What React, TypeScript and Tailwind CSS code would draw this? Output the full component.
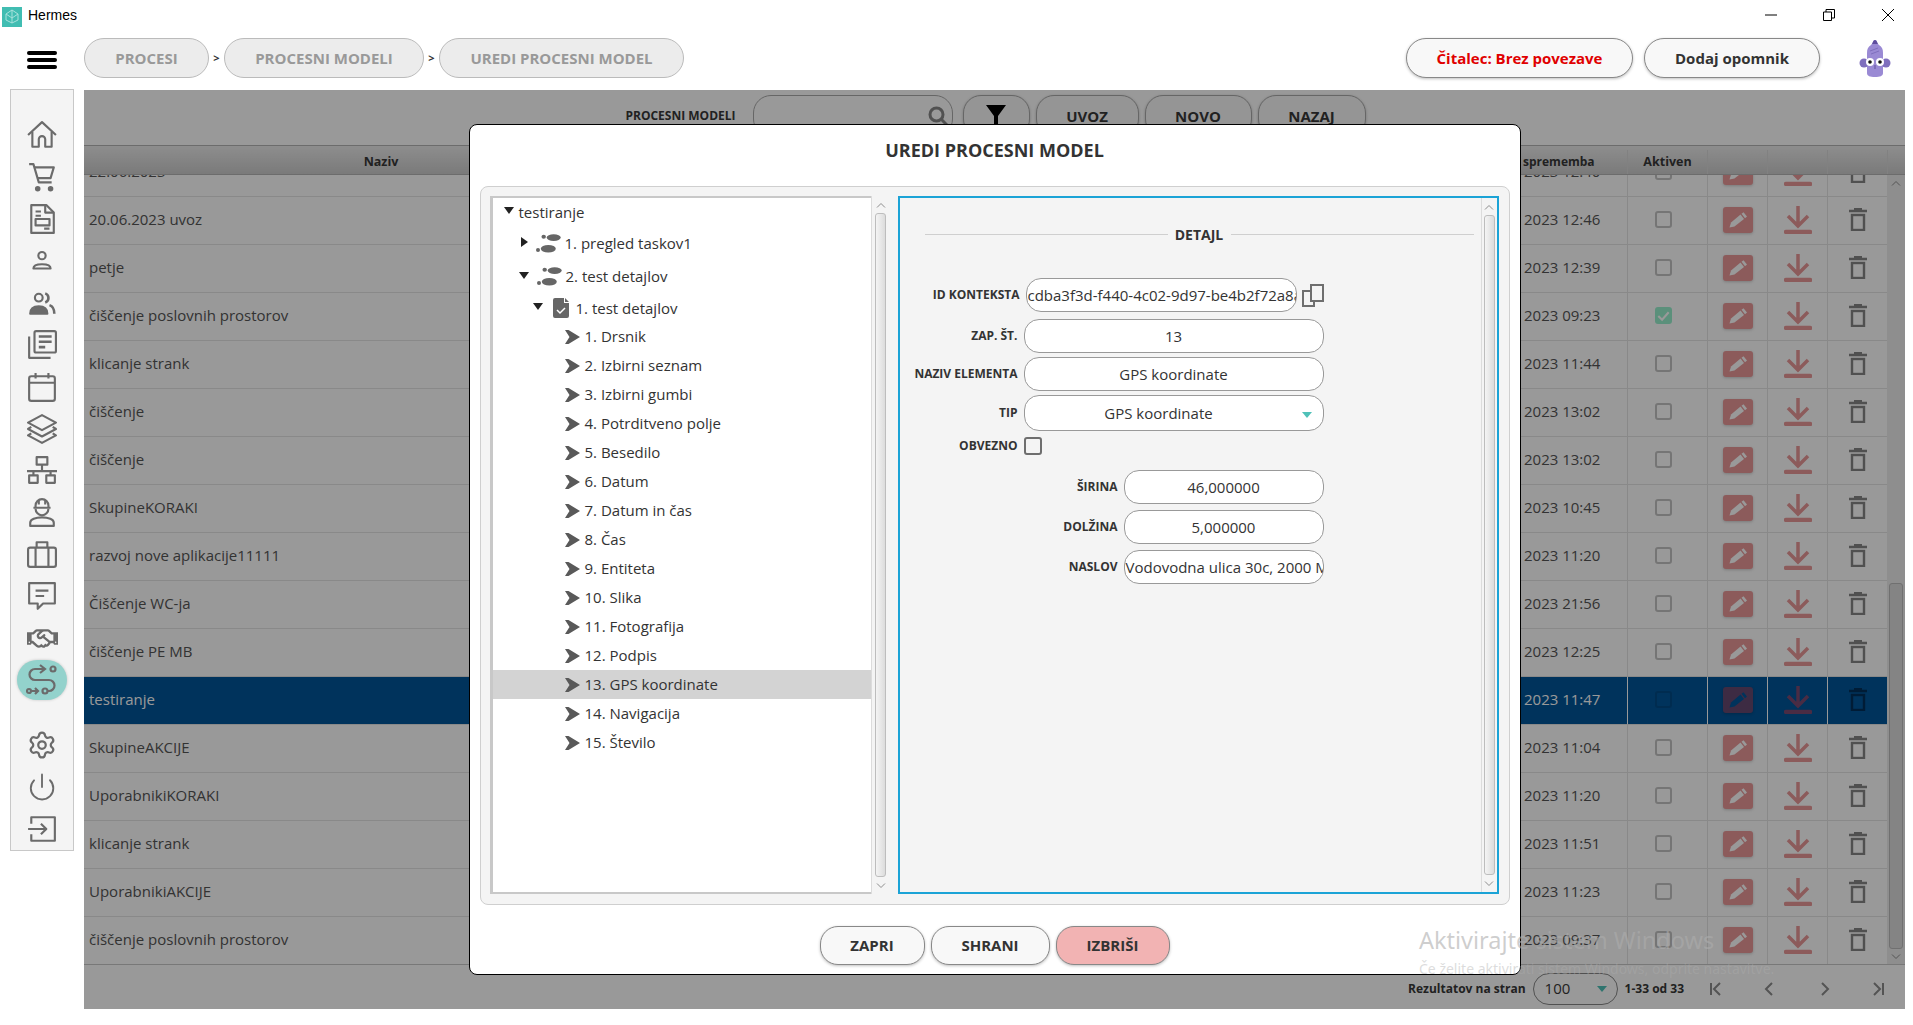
import { Power, Settings } from "lucide-react";
import { FaRegHandshake } from "react-icons/fa";

const rows = [
  { name: "22.06.2023", date: "2023 12:40" },
  { name: "20.06.2023 uvoz", date: "2023 12:46" },
  { name: "petje", date: "2023 12:39" },
  { name: "čiščenje poslovnih prostorov", date: "2023 09:23", active: true },
  { name: "klicanje strank", date: "2023 11:44" },
  { name: "čiščenje", date: "2023 13:02" },
  { name: "čiščenje", date: "2023 13:02" },
  { name: "SkupineKORAKI", date: "2023 10:45" },
  { name: "razvoj nove aplikacije11111", date: "2023 11:20" },
  { name: "Čiščenje WC-ja", date: "2023 21:56" },
  { name: "čiščenje PE MB", date: "2023 12:25" },
  { name: "testiranje", date: "2023 11:47", selected: true },
  { name: "SkupineAKCIJE", date: "2023 11:04" },
  { name: "UporabnikiKORAKI", date: "2023 11:20" },
  { name: "klicanje strank", date: "2023 11:51" },
  { name: "UporabnikiAKCIJE", date: "2023 11:23" },
  { name: "čiščenje poslovnih prostorov", date: "2023 09:37" },
];

const elements = [
  "1. Drsnik",
  "2. Izbirni seznam",
  "3. Izbirni gumbi",
  "4. Potrditveno polje",
  "5. Besedilo",
  "6. Datum",
  "7. Datum in čas",
  "8. Čas",
  "9. Entiteta",
  "10. Slika",
  "11. Fotografija",
  "12. Podpis",
  "13. GPS koordinate",
  "14. Navigacija",
  "15. Število",
];

function SideIcon({ children }: { children: React.ReactNode }) {
  return (
    <svg viewBox="0 0 28 28" fill="none" stroke="currentColor" strokeWidth="2" strokeLinejoin="round" className="w-[30px] h-[30px]">
      {children}
    </svg>
  );
}

function Sidebar() {
  return (
    <div className="w-[64px] h-[762px] -mt-px bg-[#f4f4f4] border border-[#c8c8c8] pt-[24px] flex flex-col items-center text-[#6b6b6b] shrink-0">
      <div className="h-[42px] flex items-center justify-center">
        <SideIcon>
          <path d="M1 14 14 2l13 12" />
          <path d="M5 11v14h6v-7a3 3 0 0 1 6 0v7h6V11" />
        </SideIcon>
      </div>
      <div className="h-[42px] flex items-center justify-center">
        <SideIcon>
          <path d="M2 2h4l5 17h12" />
          <path d="M7 5h18l-3 10H10" />
          <circle cx="10" cy="25" r="1.600" fill="currentColor" />
          <circle cx="22" cy="25" r="1.600" fill="currentColor" />
        </SideIcon>
      </div>
      <div className="h-[42px] flex items-center justify-center">
        <SideIcon>
          <path d="M4 1h14l7 7v19H4z" />
          <path d="M17 1v7h8" />
          <path d="M8 7h5M8 11h5M16 23h5" />
          <rect x="8" y="14" width="13" height="6" />
        </SideIcon>
      </div>
      <div className="h-[42px] flex items-center justify-center">
        <SideIcon>
          <circle cx="14" cy="9" r="3.400" />
          <path d="M6 21c0-3 3-4 8-4s8 1 8 4z" />
        </SideIcon>
      </div>
      <div className="h-[42px] flex items-center justify-center">
        <SideIcon>
          <circle cx="11" cy="9" r="3.600" />
          <path d="M3 24c0-5 3-7 8-7s8 2 8 7z" fill="currentColor" />
          <path d="M17 5a4.500 4.500 0 0 1 0 8.500M21 16c3 1 4.500 4 4.500 8" strokeWidth="2.400" />
        </SideIcon>
      </div>
      <div className="h-[42px] flex items-center justify-center">
        <SideIcon>
          <rect x="7" y="1" width="20" height="20" rx="1.500" />
          <path d="M2 6v20h20" />
          <path d="M11 6h12M11 11h12M11 16h6" strokeWidth="2.400" />
        </SideIcon>
      </div>
      <div className="h-[42px] flex items-center justify-center">
        <SideIcon>
          <rect x="2" y="4" width="24" height="23" rx="2" />
          <path d="M2 10h24M8 1v5M20 1v5" />
        </SideIcon>
      </div>
      <div className="h-[42px] flex items-center justify-center">
        <SideIcon>
          <path d="M14 1 27 8l-13 7L1 8z" />
          <path d="m4 12-3 2 13 7 13-7-3-2" />
          <path d="m4 18-3 2 13 7 13-7-3-2" />
        </SideIcon>
      </div>
      <div className="h-[42px] flex items-center justify-center">
        <SideIcon>
          <rect x="9" y="2" width="10" height="7" />
          <path d="M14 9v6M0 15h28M6 15v4M22 15v4" />
          <rect x="2" y="19" width="8" height="7" />
          <rect x="18" y="19" width="8" height="7" />
        </SideIcon>
      </div>
      <div className="h-[42px] flex items-center justify-center">
        <SideIcon>
          <path d="M8 10V8a6 6 0 0 1 12 0v2" />
          <path d="M6 10h16M11 3v4M17 3v4" />
          <path d="M8 11a6 6 0 0 0 12 0" />
          <path d="M3 27v-3c0-3 5-5 11-5s11 2 11 5v3z" />
        </SideIcon>
      </div>
      <div className="h-[42px] flex items-center justify-center">
        <SideIcon>
          <rect x="1" y="8" width="26" height="18" rx="2" />
          <path d="M9 8V3h10v5M8 8v18M20 8v18" />
        </SideIcon>
      </div>
      <div className="h-[42px] flex items-center justify-center">
        <SideIcon>
          <path d="M2 2h24v19H15l-5 5v-5H2z" />
          <path d="M8 9h12M8 14h8" />
        </SideIcon>
      </div>
      <div className="h-[42px] flex items-center justify-center">
        <FaRegHandshake className="w-[31px] h-[31px]" />
      </div>
      <div className="h-[42px] flex items-center justify-center">
        <div className="w-[50px] h-[40px] rounded-full bg-[#93d2cc] flex items-center justify-center shadow-[0_0_3px_rgba(0,0,0,0.2)]">
          <svg viewBox="0 0 32 32" fill="none" stroke="currentColor" strokeWidth="2.200" className="w-[32px] h-[32px]">
            <path d="M18 5H9a5.500 5.500 0 0 0 0 11h14a5 5 0 0 1 0 11h-1" />
            <path d="m14 1 5 4-5 4" />
            <circle cx="27" cy="5" r="2.500" />
            <circle cx="3" cy="27" r="2" />
            <path d="M5 27h6m-2-3 3 3-3 3" />
            <circle cx="19" cy="27" r="2.500" />
          </svg>
        </div>
      </div>
      <div className="h-[42px] mt-[23px] flex items-center justify-center">
        <Settings className="w-[30px] h-[30px]" strokeWidth={1.800} />
      </div>
      <div className="h-[42px] flex items-center justify-center">
        <Power className="w-[30px] h-[30px]" strokeWidth={1.500} />
      </div>
      <div className="h-[42px] flex items-center justify-center">
        <SideIcon>
          <path d="M4 9V3h22v22H4v-6" />
          <path d="M1 14h17M13 9l5 5-5 5" />
        </SideIcon>
      </div>
    </div>
  );
}

function Avatar() {
  return (
    <svg viewBox="0 0 32 37" className="w-[32px] h-[37px]">
      <path d="M16 0c2 0 2 3 4 5 3 2 4 4 4 8v20c0 3-3 4-8 4s-8-1-8-4V13c0-4 1-6 4-8 2-2 2-5 4-5z" fill="#9a8ad4" />
      <path d="M16 0c2 0 2 3 3 4h-6c1-1 1-4 3-4z" fill="#5f4e9e" />
      <circle cx="5" cy="23" r="4.500" fill="#7f6fbd" />
      <circle cx="27" cy="23" r="4.500" fill="#7f6fbd" />
      <circle cx="11" cy="22" r="4" fill="#fff" />
      <circle cx="21" cy="22" r="4" fill="#fff" />
      <circle cx="11" cy="22" r="1.800" fill="#111" />
      <circle cx="21" cy="22" r="1.800" fill="#111" />
      <path d="M11 11l8-3M12 14l8-3" stroke="#7f6fbd" strokeWidth="1" />
      <path d="M16 25v4" stroke="#5f4e9e" strokeWidth="1" />
    </svg>
  );
}

function Checkbox({ active, selected }: { active?: boolean; selected?: boolean }) {
  if (active) {
    return (
      <div className="w-[17px] h-[17px] rounded-[3px] bg-[#98f0ce] flex items-center justify-center">
        <svg viewBox="0 0 18 18" fill="none" stroke="#fff" strokeWidth="2.200" className="w-[17px] h-[17px]">
          <path d="m3.500 9.500 4 4 7-8" />
        </svg>
      </div>
    );
  }
  return (
    <div className={`w-[17px] h-[17px] rounded-[3px] border-2 ${selected ? "border-[#004a85]" : "border-[#c4c4c4]"}`} />
  );
}

function EditIcon({ selected }: { selected?: boolean }) {
  return (
    <div className={`w-[30px] h-[26px] rounded-[3px] flex items-center justify-center shadow-[0_1px_3px_rgba(0,0,0,0.2)] ${selected ? "bg-[#664971]" : "bg-[#e99898]"}`}>
      <svg viewBox="0 0 20 18" className="w-[20px] h-[18px]" fill={selected ? "#005599" : "#fff"}>
        <path d="M1.500 16.500 3 11.500 12.500 3.500 16 8 6.500 15.500z" />
        <path d="M13.500 2.700 15.500 1.200 19 5.500 17 7.200z" />
      </svg>
    </div>
  );
}

function DownloadIcon({ selected }: { selected?: boolean }) {
  return (
    <svg viewBox="0 0 28 28" fill="none" strokeWidth="3.500" stroke={selected ? "#7a4a72" : "#e99898"} className="w-[28px] h-[28px]">
      <path d="M14 0v19M4 10l10 10 10-10" />
      <rect x="1" y="25" width="26" height="2" rx="1" strokeWidth="2.500" />
    </svg>
  );
}

function TrashIcon({ selected }: { selected?: boolean }) {
  return (
    <svg viewBox="0 0 18 23" fill="none" strokeWidth="2.400" stroke={selected ? "#00305a" : "#858585"} className="w-[18px] h-[23px]">
      <path d="M0 3h18M5 1h8" />
      <rect x="3" y="7" width="12" height="15" />
    </svg>
  );
}

function Chevron({ up }: { up?: boolean }) {
  return (
    <svg viewBox="0 0 10 6" fill="none" stroke="#8c8c8c" strokeWidth="1" className="w-[10px] h-[6px]">
      <path d={up ? "M1 5.500 5 1.500 9 5.500" : "M1 .5 5 4.500 9 .5"} />
    </svg>
  );
}

function Scroller() {
  return (
    <div className="w-full h-full flex flex-col items-center bg-[#f4f4f4] border-l border-[#dcdcdc]">
      <div className="h-[17px] flex items-center"><Chevron up /></div>
      <div className="w-[11px] flex-1 rounded-[3px] border border-[#bdbdbd] bg-gradient-to-r from-[#f4f4f4] to-[#dcdcdc]" />
      <div className="h-[17px] flex items-center"><Chevron /></div>
    </div>
  );
}

function Footprints() {
  return (
    <svg viewBox="0 0 25 19" fill="#666" className="w-[25px] h-[19px] shrink-0">
      <ellipse cx="7.700" cy="2.700" rx="2.200" ry="2" />
      <ellipse cx="17.700" cy="3.600" rx="7" ry="3.400" />
      <ellipse cx="2" cy="16" rx="2" ry="2" />
      <ellipse cx="12.300" cy="14.800" rx="7.500" ry="3.800" />
    </svg>
  );
}

function Caret({ open }: { open?: boolean }) {
  return open ? (
    <div className="w-0 h-0 shrink-0 border-x-[5px] border-x-transparent border-t-[7px] border-t-[#222] -mt-[3px]" />
  ) : (
    <div className="w-0 h-0 shrink-0 border-y-[5px] border-y-transparent border-l-[7px] border-l-[#222] -mt-[3px]" />
  );
}

function Tree() {
  return (
    <div className="flex-1 bg-white border-l-[3px] border-y-[2px] border-[#c8c8c8] text-[15px] text-[#333] whitespace-nowrap">
      <div className="h-[30px] pb-[2px] pl-[11px] flex items-center gap-[5px]">
        <Caret open />
        <span>testiranje</span>
      </div>
      <div className="h-[30px] pl-[28px] flex items-center">
        <Caret />
        <div className="ml-[8px] mr-[4px]"><Footprints /></div>
        <span>1. pregled taskov1</span>
      </div>
      <div className="h-[37px] pl-[26px] flex items-center">
        <Caret open />
        <div className="ml-[8px] mr-[4px]"><Footprints /></div>
        <span>2. test detajlov</span>
      </div>
      <div className="h-[27px] pb-[1px] pl-[40px] flex items-center">
        <Caret open />
        <svg viewBox="0 0 16 20" className="w-[16px] h-[20px] ml-[10px] mr-[7px] shrink-0">
          <path d="M2 0h9v5h5v13a2 2 0 0 1-2 2H2a2 2 0 0 1-2-2V2a2 2 0 0 1 2-2zM12 0l4 4h-4z" fill="#666" />
          <path d="m4 12 3 3 5-5" fill="none" stroke="#fff" strokeWidth="1.500" />
        </svg>
        <span>1. test detajlov</span>
      </div>
      {elements.map((item) => (
        <div
          key={item}
          className={`h-[29px] pl-[72px] flex items-center ${item.startsWith("13.") ? "bg-[#d3d3d3]" : ""}`}
        >
          <svg viewBox="0 0 15 14" className="w-[15px] h-[14px] mr-[5px] shrink-0" fill="#595959">
            <path d="M0 0H3.500L15 7 3.500 14H0L4.500 7z" />
          </svg>
          <span>{item}</span>
        </div>
      ))}
    </div>
  );
}

function Field({ label, labelWidth, width, children, h = "h-[34px]", mt, pr }: {
  label: string;
  labelWidth: string;
  width: string;
  children: React.ReactNode;
  h?: string;
  mt: string;
  pr?: string;
}) {
  return (
    <div className={`flex items-center ${mt}`}>
      <div className={`${labelWidth} text-right text-[12px] font-bold text-[#333] whitespace-nowrap`}>{label}</div>
      <div className={`ml-[6px] ${width} ${h} ${pr ?? ""} relative rounded-[15px] border border-[#999] bg-white flex items-center justify-center text-[15px] text-[#333] overflow-hidden whitespace-nowrap`}>
        {children}
      </div>
    </div>
  );
}

function Detail() {
  return (
    <div className="w-[601px] border-2 border-[#1ba3d6] bg-[#f4f4f4] flex">
      <div className="flex-1">
        <div className="mt-[28px] h-[16px] ml-[25px] mr-[7px] flex items-center">
          <div className="flex-1 h-px bg-[#cfcfcf]" />
          <div className="w-[63px] text-center text-[14px] font-bold text-[#333]">DETAJL</div>
          <div className="flex-1 h-px bg-[#cfcfcf]" />
        </div>
        <div className="flex items-center mt-[36px]">
          <div className="w-[120px] text-right text-[12px] font-bold text-[#333] whitespace-nowrap">ID KONTEKSTA</div>
          <div className="ml-[6px] w-[271px] h-[34px] rounded-[15px] border border-[#999] bg-white flex items-center pl-[1px] text-[15px] text-[#333] overflow-hidden whitespace-nowrap">
            cdba3f3d-f440-4c02-9d97-be4b2f72a8a1
          </div>
          <svg viewBox="0 0 22 23" fill="none" stroke="#6e6e6e" strokeWidth="2" className="ml-[5px] w-[22px] h-[23px]">
            <path d="M9 1h12v16H9z" />
            <path d="M9 7H1v15h11v-5" />
          </svg>
        </div>
        <Field mt="mt-[7px]" label="ZAP. ŠT." labelWidth="w-[118px]" width="w-[300px]">13</Field>
        <Field mt="mt-[4px]" label="NAZIV ELEMENTA" labelWidth="w-[118px]" width="w-[300px]">GPS koordinate</Field>
        <Field mt="mt-[4px]" h="h-[36px]" pr="pr-[30px]" label="TIP" labelWidth="w-[118px]" width="w-[300px]">
          GPS koordinate
          <div className="absolute right-[11px] top-[16px] w-0 h-0 border-x-[5px] border-x-transparent border-t-[6px] border-t-[#4fc1b8]" />
        </Field>
        <div className="flex items-center mt-[6px]">
          <div className="w-[118px] text-right text-[12px] font-bold text-[#333]">OBVEZNO</div>
          <div className="ml-[6px] w-[18px] h-[18px] rounded-[3px] border-2 border-[#6e6e6e] bg-[#f4f4f4]" />
        </div>
        <Field mt="mt-[15px]" label="ŠIRINA" labelWidth="w-[218px]" width="w-[200px]">46,000000</Field>
        <Field mt="mt-[6px]" label="DOLŽINA" labelWidth="w-[218px]" width="w-[200px]">5,000000</Field>
        <div className="flex items-center mt-[6px]">
          <div className="w-[218px] text-right text-[12px] font-bold text-[#333]">NASLOV</div>
          <div className="ml-[6px] w-[200px] h-[34px] rounded-[15px] border border-[#999] bg-white flex items-center pl-[1px] text-[15px] text-[#333] overflow-hidden whitespace-nowrap">
            Vodovodna ulica 30c, 2000 Maribor
          </div>
        </div>
      </div>
      <div className="w-[16px] shrink-0">
        <Scroller />
      </div>
    </div>
  );
}

function Modal() {
  return (
    <div className="w-[1052px] h-[851px] bg-white border-[1.500px] border-black rounded-[8px] flex flex-col items-center">
      <div className="h-[61px] pb-[10px] flex items-center text-[18px] font-bold text-[#333]">UREDI PROCESNI MODEL</div>
      <div className="w-[1030px] h-[719px] bg-[#f4f4f4] border border-[#cfcfcf] rounded-[8px] pt-[9px] pb-[10px] pl-[9px] pr-[10px] flex">
        <div className="w-[400px] flex">
          <Tree />
          <div className="w-[19px] shrink-0">
            <Scroller />
          </div>
        </div>
        <div className="w-[8px]" />
        <Detail />
      </div>
      <div className="mt-[21px] flex gap-[6px] text-[15px] font-bold text-[#333]">
        <div className="w-[105px] h-[39px] rounded-[18px] border border-[#888] bg-[#f8f8f8] shadow-[0_1px_3px_rgba(0,0,0,0.25)] flex items-center justify-center">ZAPRI</div>
        <div className="w-[119px] h-[39px] rounded-[18px] border border-[#888] bg-[#f8f8f8] shadow-[0_1px_3px_rgba(0,0,0,0.25)] flex items-center justify-center">SHRANI</div>
        <div className="w-[114px] h-[39px] rounded-[18px] border border-[#888] bg-[#f2b3b3] shadow-[0_1px_3px_rgba(0,0,0,0.25)] flex items-center justify-center">IZBRIŠI</div>
      </div>
    </div>
  );
}

function TableRow({ row }: { row: (typeof rows)[number] }) {
  const line = row.selected ? "border-white" : "border-[#e4e4e4]";
  return (
    <div className={`h-[48px] grid grid-cols-[594px_1fr_106px_80px_60px_60px_60px] items-stretch text-[15px] border-b border-[#e4e4e4] ${row.selected ? "bg-[#005599] text-white" : "text-[#555]"}`}>
      <div className="pl-[5px] pb-[2px] flex items-center whitespace-nowrap">{row.name}</div>
      <div />
      <div className="pl-[3px] pb-[2px] flex items-center whitespace-nowrap">{row.date}</div>
      <div className={`border-l ${line} pr-[8px] pb-[2px] flex items-center justify-center`}>
        <Checkbox active={row.active} selected={row.selected} />
      </div>
      <div className={`border-l ${line} pb-[2px] flex items-center justify-center`}>
        <EditIcon selected={row.selected} />
      </div>
      <div className={`border-l ${line} pb-[2px] flex items-center justify-center`}>
        <DownloadIcon selected={row.selected} />
      </div>
      <div className={`border-l ${line} pb-[2px] flex items-center justify-center`}>
        <TrashIcon selected={row.selected} />
      </div>
    </div>
  );
}

function Main() {
  const toolBtn = "h-[42px] rounded-[18px] border border-[#aaa] bg-[#f8f8f8] shadow-[0_1px_3px_rgba(0,0,0,0.25)] flex items-center justify-center text-[15px] font-bold text-[#383838]";
  return (
    <div className="relative w-[1821px] h-[919px] ml-[10px] bg-white flex flex-col">
      <div className="h-[55px] pt-[5px] pl-[2px] flex items-start justify-center gap-[6px]">
        <div className="h-[42px] mr-[11px] flex items-center text-[12px] font-bold text-[#383838]">PROCESNI MODELI</div>
        <div className="w-[200px] mr-[4px] h-[42px] rounded-[18px] border border-[#aaa] bg-white flex items-center justify-end pr-[4px]">
          <svg viewBox="0 0 20 20" fill="none" stroke="#888" strokeWidth="3" className="w-[20px] h-[20px]">
            <circle cx="8.500" cy="8.500" r="6.500" />
            <path d="m13 13 6 6" />
          </svg>
        </div>
        <div className={`${toolBtn} w-[67px]`}>
          <svg viewBox="0 0 20 22" className="w-[20px] h-[22px]" fill="#000">
            <path d="M0 0h20l-8 11v11H8V11z" />
          </svg>
        </div>
        <div className={`${toolBtn} w-[103px]`}>UVOZ</div>
        <div className={`${toolBtn} w-[107px]`}>NOVO</div>
        <div className={`${toolBtn} w-[108px]`}>NAZAJ</div>
      </div>

      <div className="h-[30px] pt-[4px] flex bg-gradient-to-b from-[#ececec] to-[#cccccc] border-y border-[#b4b4b4] text-[12.500px] font-bold text-[#383838]">
        <div className="flex-1 grid grid-cols-[594px_1fr_106px_80px_60px_60px_60px] items-stretch">
          <div className="flex items-center justify-center">Naziv</div>
          <div />
          <div className="pl-[2px] flex items-center text-[12px]">sprememba</div>
          <div className="border-l border-[#d8d8d8] flex items-center justify-center">Aktiven</div>
          <div className="border-l border-[#d8d8d8]" />
          <div className="border-l border-[#d8d8d8]" />
          <div className="border-l border-[#d8d8d8]" />
        </div>
        <div className="w-[18px] border-l border-[#d8d8d8]" />
      </div>

      <div className="h-[790px] flex border-b border-[#c8c8c8]">
        <div className="flex-1 overflow-hidden">
          <div className="-mt-[26px]">
            {rows.map((row, i) => (
              <TableRow key={i} row={row} />
            ))}
          </div>
        </div>
        <div className="w-[18px] bg-[#ededed] flex flex-col items-center">
          <div className="h-[16px] flex items-center"><Chevron up /></div>
          <div className="h-[392px]" />
          <div className="w-[14px] flex-1 rounded-[3px] border border-[#bbb] bg-[#dcdcdc]" />
          <div className="h-[15px] flex items-center"><Chevron /></div>
        </div>
      </div>

      <div className="flex-1 pt-[3px] flex items-center justify-end text-[#383838]">
        <span className="text-[12px] font-bold mr-[7px]">Rezultatov na stran</span>
        <div className="w-[85px] h-[32px] rounded-[16px] border border-[#888] flex items-center justify-between pl-[11px] pr-[10px] text-[15px]">
          100
          <div className="w-0 h-0 border-x-[5px] border-x-transparent border-t-[6px] border-t-[#4fc1b8]" />
        </div>
        <span className="text-[12px] font-bold ml-[7px] mr-[5px]">1-33 od 33</span>
        {["M3 2v12M12 2 6 8l6 6", "M10 2 4 8l6 6", "M6 2l6 6-6 6", "M4 2l6 6-6 6M13 2v12"].map((d) => (
          <div key={d} className="w-[54px] flex items-center justify-center">
            <svg viewBox="0 0 16 16" fill="none" stroke="#8c8c8c" strokeWidth="2" className="w-[16px] h-[16px]">
              <path d={d} />
            </svg>
          </div>
        ))}
      </div>

      {/* zatemnitev in dialog */}
      <div className="absolute inset-0 bg-black/40 flex items-center justify-center">
        <Modal />
      </div>
    </div>
  );
}

export default function App() {
  const crumb = "h-[40px] rounded-[20px] border border-[#bbb] bg-[#ececec] flex items-center justify-center text-[15px] font-bold text-[#999]";
  return (
    <div className="relative w-[1913px] h-[1025px] bg-white overflow-hidden font-['Open_Sans',sans-serif]">
      <div className="h-[30px] flex items-center">
        <svg viewBox="0 0 20 20" className="w-[20px] h-[20px] ml-[2px] mt-[4px]">
          <rect width="20" height="20" fill="#41bdb2" />
          <path d="M10 3 4 7v6l6 3 6-3V7zM10 3v13M4 7l6 4 6-4" fill="none" stroke="#a8e2dc" strokeWidth="1" />
        </svg>
        <span className="ml-[6px] text-[14px] text-black font-['Liberation_Sans',sans-serif]">Hermes</span>
        <div className="ml-auto flex items-center">
          <svg viewBox="0 0 12 12" fill="none" stroke="#000" strokeWidth="1" className="w-[12px] h-[12px]">
            <path d="M0 6h12" />
          </svg>
          <svg viewBox="0 0 12 12" fill="none" stroke="#000" strokeWidth="1" className="w-[12px] h-[12px] ml-[46px]">
            <path d="M.5 3h8v8.500h-8zM3 3V.5h8.500V9H8.500" />
          </svg>
          <svg viewBox="0 0 12 12" fill="none" stroke="#000" strokeWidth="1" className="w-[12px] h-[12px] ml-[47px] mr-[19px]">
            <path d="M0 0l12 12M12 0 0 12" />
          </svg>
        </div>
      </div>

      <div className="h-[60px] pt-[8px] flex items-start">
        <div className="w-[84px] h-[40px] pr-[1px] flex items-center justify-center">
          <div className="w-[30px] flex flex-col gap-[3px] mt-[4px]">
            <div className="h-[4px] rounded-full bg-black" />
            <div className="h-[4px] rounded-full bg-black" />
            <div className="h-[4px] rounded-full bg-black" />
          </div>
        </div>
        <div className={`${crumb} w-[125px]`}>PROCESI</div>
        <div className="w-[15px] h-[40px] flex items-center justify-center text-[11px] font-bold text-[#333]">&gt;</div>
        <div className={`${crumb} w-[200px]`}>PROCESNI MODELI</div>
        <div className="w-[15px] h-[40px] flex items-center justify-center text-[11px] font-bold text-[#333]">&gt;</div>
        <div className={`${crumb} w-[245px]`}>UREDI PROCESNI MODEL</div>
        <div className="ml-auto flex items-center mr-[22px]">
          <div className="w-[227px] h-[40px] rounded-[20px] border border-[#888] bg-[#f8f8f8] shadow-[0_1px_3px_rgba(0,0,0,0.25)] flex items-center justify-center text-[15px] font-bold text-[#e00000]">Čitalec: Brez povezave</div>
          <div className="w-[176px] ml-[11px] h-[40px] rounded-[20px] border border-[#888] bg-[#f8f8f8] shadow-[0_1px_3px_rgba(0,0,0,0.25)] flex items-center justify-center text-[15px] font-bold text-[#333]">Dodaj opomnik</div>
          <div className="ml-[39px] mt-[1px]"><Avatar /></div>
        </div>
      </div>

      <div className="flex items-start pl-[10px]">
        <Sidebar />
        <Main />
      </div>

      {/* Windows watermark */}
      <div className="absolute left-[1419px] top-[924px] pointer-events-none whitespace-nowrap font-['Noto_Sans',sans-serif] text-[#adadad]/60">
        <div className="text-[23.500px] leading-[32px]">Aktivirajte sistem Windows</div>
        <div className="text-[14px] leading-[20px] mt-[3px] opacity-70">Če želite aktivirati sistem Windows, odprite nastavitve.</div>
      </div>
    </div>
  );
}
